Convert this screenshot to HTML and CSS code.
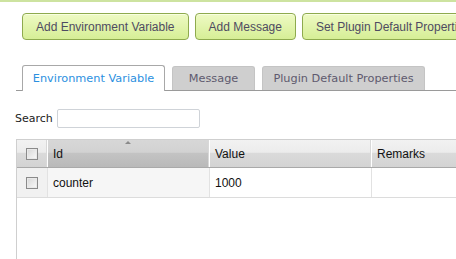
FILE: index.html
```html
<!DOCTYPE html>
<html>
<head>
	<meta charset="utf-8">
	<link rel="stylesheet" href="styles.css">
</head>
<body>
	<div class="topline"></div>

	<div class="toolbar">
		<button class="btn">Add Environment Variable</button>
		<button class="btn">Add Message</button>
		<button class="btn">Set Plugin Default Properties</button>
	</div>

	<div class="tabs">
		<div class="tab active t-env">Environment Variable</div>
		<div class="tab t-msg">Message</div>
		<div class="tab t-plugin">Plugin Default Properties</div>
	</div>

	<div class="search">
		<label>Search</label>
		<input type="text" class="search-input">
	</div>

	<div class="grid">
		<div class="row head">
			<div class="cell c-check"><span class="check"></span></div>
			<div class="cell c-id sorted">Id<span class="sort"></span></div>
			<div class="cell c-val">Value</div>
			<div class="cell c-rem">Remarks</div>
		</div>
		<div class="row data">
			<div class="cell c-check"><span class="check"></span></div>
			<div class="cell c-id">counter</div>
			<div class="cell c-val">1000</div>
			<div class="cell c-rem"></div>
		</div>
	</div>
</body>
</html>
```

FILE: styles.css
```css
body, html {
	height: 100%;
}

body {
	margin: 0;
	padding: 0;
	background: #fff;
	overflow: hidden;
	font-family: "DejaVu Sans", Verdana, sans-serif;
}

.topline {
	height: 2px;
	background: #cde3a0;
}

.toolbar {
	display: flex;
	gap: 6px;
	padding: 11px 0 0 22px;
	white-space: nowrap;
}

.btn {
	flex: none;
	height: 27px;
	padding: 0 13px;
	font-family: "Liberation Sans", Arial, sans-serif;
	font-size: 12px;
	color: #4f4b62;
	background: linear-gradient(#eefac4, #d6ee96);
	border: 1px solid #8eaa4e;
	border-radius: 4px;
	box-shadow: inset 0 1px 0 #f8ffe0;
}

.tabs {
	display: flex;
	align-items: flex-end;
	gap: 7px;
	margin: 25px 0 0 16px;
	padding-left: 6px;
	border-bottom: 1px solid #9a9a9a;
	height: 25px;
}

.tab {
	flex: none;
	box-sizing: border-box;
	height: 24px;
	line-height: 24px;
	font-size: 11.3px;
	text-align: center;
	color: #5e5a6e;
	background: #cfcfcf;
	border: 1px solid #c4c4c4;
	border-bottom: none;
	border-radius: 3px 3px 0 0;
	white-space: nowrap;
}

.t-env {
	width: 143px;
}

.t-msg {
	width: 83px;
}

.t-plugin {
	width: 163px;
}

.tab.active {
	height: 26px;
	line-height: 26px;
	color: #2b90e0;
	background: #fff;
	border-color: #a8a8a8;
	margin-bottom: -1px;
}

.search {
	display: flex;
	align-items: center;
	gap: 4px;
	margin: 18px 0 0 15px;
	font-size: 11px;
	color: #222;
}

.search-input {
	width: 143px;
	height: 19px;
	box-sizing: border-box;
	margin: 0;
	border: 1px solid #cfd3d8;
	border-radius: 2px;
}

.grid {
	margin: 11px 0 0 16px;
	width: 520px;
	height: 200px;
	border-top: 1px solid #cfcfcf;
	border-left: 1px solid #cfcfcf;
	font-family: "Liberation Sans", Arial, sans-serif;
	font-size: 12px;
	color: #111;
}

.row {
	display: flex;
}

.cell {
	flex: none;
	box-sizing: border-box;
	padding-left: 5px;
	display: flex;
	align-items: center;
	position: relative;
}

.c-check {
	width: 31px;
	justify-content: center;
	padding-left: 0;
}

.c-id, .c-val {
	width: 162px;
}

.c-rem {
	width: 160px;
}

.head {
	height: 27px;
	border-bottom: 1px solid #a9a9a9;
}

.head .cell {
	background: linear-gradient(#f2f2f2 0%, #ececec 45%, #dadada 50%, #d3d3d3 100%);
	border-right: 1px solid #fff;
	box-shadow: inset -1px 0 0 #d8d8d8;
}

.head .cell.sorted {
	background: linear-gradient(#d7d7d7 0%, #d2d2d2 45%, #c3c3c3 50%, #b9b9b9 100%);
}

.sort {
	position: absolute;
	left: 77px;
	top: 1px;
	width: 0;
	height: 0;
	border-left: 3px solid transparent;
	border-right: 3px solid transparent;
	border-bottom: 3px solid #8a8a8a;
}

.data {
	height: 29px;
	border-bottom: 1px solid #dcdcdc;
}

.data .cell {
	border-right: 1px solid #e2e2e2;
}

.data .c-check {
	background: #f1f1f1;
}

.data .c-id {
	background: #f6f6f6;
}

.check {
	width: 10px;
	height: 10px;
	border: 1px solid #8a8a8a;
	background: linear-gradient(135deg, #d6d6d6, #fafafa);
	box-shadow: inset 0 0 0 1px #e9e9e9;
}
```
